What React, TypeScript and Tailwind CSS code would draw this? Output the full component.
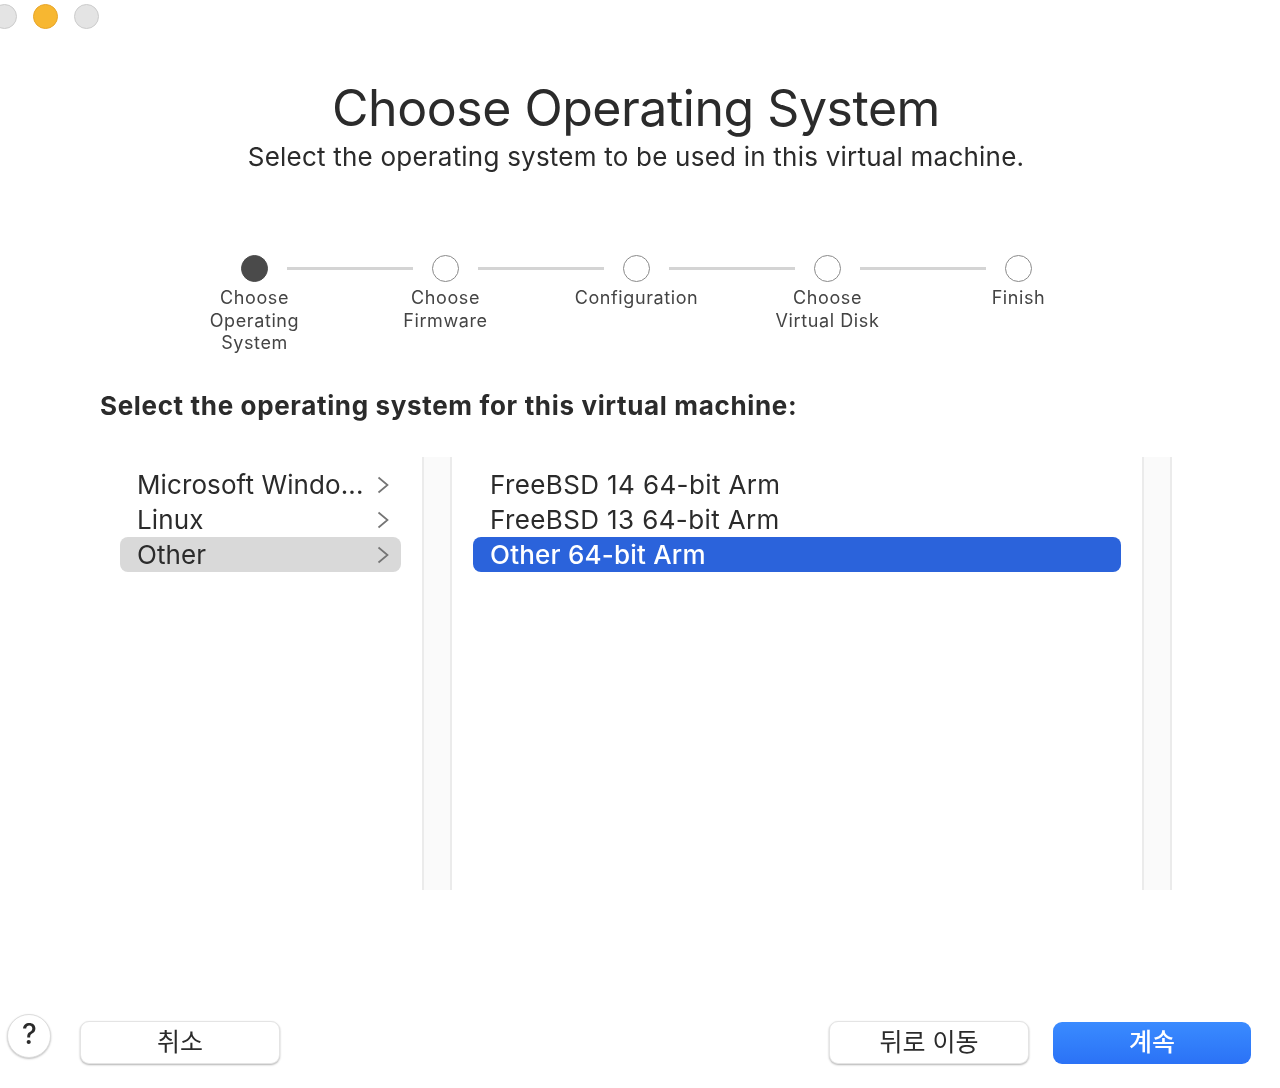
import React from "react";

const steps = [
  { label: ["Choose", "Operating", "System"], active: true },
  { label: ["Choose", "Firmware"] },
  { label: ["Configuration"] },
  { label: ["Choose", "Virtual Disk"] },
  { label: ["Finish"] },
];

const categories = ["Microsoft Windo...", "Linux", "Other"];
const versions = ["FreeBSD 14 64-bit Arm", "FreeBSD 13 64-bit Arm", "Other 64-bit Arm"];

const font = "font-['Inter','Noto_Sans_CJK_KR',sans-serif]";

function Chevron() {
  return (
    <svg width="12" height="18" viewBox="0 0 12 18" fill="none" className="text-[#747474]">
      <path d="M1.5 1.5 L10.5 9 L1.5 16.5" stroke="currentColor" strokeWidth="1.7" />
    </svg>
  );
}

export default function App() {
  return (
    <div className={`w-[1280px] h-[1088px] bg-white overflow-hidden flex flex-col text-[#2b2b2b] blur-[0.5px] ${font}`}>
      {/* Traffic lights */}
      <div className="flex gap-[16px] ml-[-8px] mt-[4px] h-[26px]">
        <div className="w-[25px] h-[25px] rounded-full bg-[#e4e4e4] border border-[#cccccc]" />
        <div className="w-[25px] h-[25px] rounded-full bg-[#f7b731] border border-[#e8a62a]" />
        <div className="w-[25px] h-[25px] rounded-full bg-[#e4e4e4] border border-[#cccccc]" />
      </div>

      {/* Title */}
      <div className="w-[1272px] text-center">
        <h1 className="mt-[46px] text-[50px] leading-[64px] tracking-[-0.47px]">Choose Operating System</h1>
        <p className="text-[26px] leading-[34px] tracking-[0.22px]">Select the operating system to be used in this virtual machine.</p>
      </div>

      {/* Stepper */}
      <div className="mt-[81px] ml-[241px] flex items-center h-[27px]">
        {steps.map((step, i) => (
          <React.Fragment key={i}>
            <div className={`w-[27px] h-[27px] rounded-full border shrink-0 ${step.active ? "bg-[#4a4a4a] border-[#4a4a4a]" : "bg-white border-[#8a8a8a]"}`} />
            {i < steps.length - 1 && <div className="ml-[19px] mr-[19px] w-[126px] h-[3px] bg-[#d4d4d4]" />}
          </React.Fragment>
        ))}
      </div>
      <div className="mt-[5px] ml-[159px] w-[955px] h-[68px] grid grid-cols-5 text-center text-[18px] leading-[22.5px] tracking-[0.6px] text-[#444444]">
        {steps.map((step, i) => (
          <div key={i}>
            {step.label.map((line) => (
              <div key={line}>{line}</div>
            ))}
          </div>
        ))}
      </div>

      {/* Section heading */}
      <h2 className="mt-[34px] ml-[100px] text-[26px] leading-[34px] font-bold tracking-[0.65px]">Select the operating system for this virtual machine:</h2>

      {/* Browser columns */}
      <div className="mt-[34px] ml-[120px] flex h-[433px]">
        <div className="w-[281px] pt-[10px] flex flex-col">
          {categories.map((c) => (
            <div key={c} className={`h-[35px] pl-[17px] pr-[12px] flex items-center justify-between rounded-[8px] text-[26px] tracking-[0.1px] ${c === "Other" ? "bg-[#d9d9d9]" : ""}`}>
              <span>{c}</span>
              <Chevron />
            </div>
          ))}
        </div>
        <div className="ml-[21px] w-[30px] bg-[#fafafa] border-x-2 border-[#ebebeb]" />
        <div className="ml-[21px] w-[648px] pt-[10px] flex flex-col">
          {versions.map((v, i) => (
            <div key={v} className={`h-[35px] pl-[17px] flex items-center rounded-[8px] text-[26px] ${i === 2 ? "bg-[#2b63db] text-white font-medium tracking-[0.2px]" : "tracking-[0.38px]"}`}>
              {v}
            </div>
          ))}
        </div>
        <div className="ml-[21px] w-[30px] bg-[#fafafa] border-x-2 border-[#ebebeb]" />
      </div>

      {/* Footer */}
      <div className="mt-[124px] flex items-start pr-[29px]">
        <div className="ml-[7px] w-[44px] h-[44px] pb-[4px] pl-[1px] rounded-full bg-white border border-[#dddddd] shadow-[0_1px_2px_rgba(0,0,0,0.25)] flex items-center justify-center text-[28px] font-medium">?</div>
        <button className="ml-[29px] mt-[7px] w-[200px] h-[43px] rounded-[9px] bg-white border border-[#e4e4e4] shadow-[0_1px_2px_rgba(0,0,0,0.3)] text-[25px]">취소</button>
        <button className="ml-auto mt-[7px] w-[200px] h-[43px] rounded-[9px] bg-white border border-[#e4e4e4] shadow-[0_1px_2px_rgba(0,0,0,0.3)] text-[25px]">뒤로 이동</button>
        <button className="ml-[24px] mt-[8px] w-[198px] h-[42px] rounded-[9px] bg-gradient-to-b from-[#3a8bff] to-[#2b72f6] text-white text-[25px] font-medium">계속</button>
      </div>
    </div>
  );
}
